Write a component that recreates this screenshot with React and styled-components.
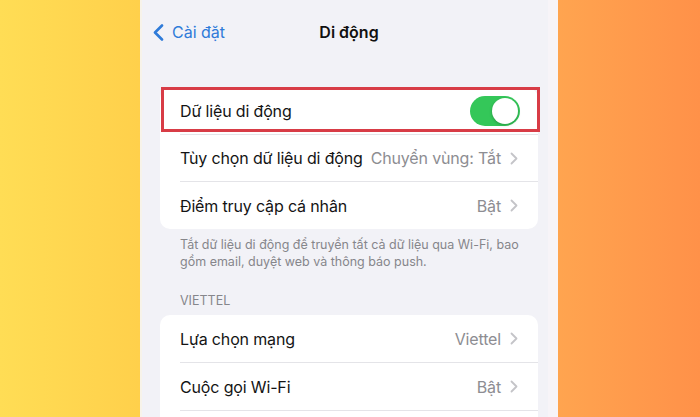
import React from "react";
import styled, { createGlobalStyle } from "styled-components";

const Global = createGlobalStyle`
  html, body { margin: 0; padding: 0; }
  body { font-family: Inter, "Noto Sans", "Liberation Sans", sans-serif; -webkit-font-smoothing: antialiased; }
  #root { width: 700px; height: 417px; overflow: hidden; }
`;

const Stage = styled.div`
  width: 700px;
  height: 417px;
  background: linear-gradient(90deg, #ffdd55 0%, #ffd04b 20%, #ffa650 78%, #ff9149 100%);
  display: flex;
  justify-content: flex-start;
  padding-left: 140px;
  box-sizing: border-box;
`;

const Phone = styled.div`
  width: 418px;
  height: 417px;
  background: #f2f2f7;
  overflow: hidden;
  box-shadow: inset -10px 0 0 #f7f4f8, inset 2px 0 0 #f7f3ea;
`;

const Nav = styled.div`
  height: 64px;
  display: grid;
  grid-template-columns: 1fr auto 1fr;
  align-items: center;
  padding: 0 13px;
`;

const Back = styled.div`
  display: flex;
  align-items: center;
  gap: 8px;
  color: #2f7bd9;
  font-size: 16px;
`;

const Title = styled.div`
  font-size: 16px;
  font-weight: 600;
  color: #111;
`;

const Content = styled.div`
  padding: 24px 20px 0 20px;
`;

const Card = styled.div`
  background: #fff;
  border-radius: 10px;
`;

const Row = styled.div`
  position: relative;
  height: ${(p) => p.$h || 47}px;
  padding-left: 20px;
  display: flex;
  ${(p) =>
    p.$highlight &&
    `&::after {
      content: "";
      position: absolute;
      left: 1px; right: -2px; top: -1px; height: 45px;
      border: 3px solid #d83c46;
      box-sizing: border-box;
      pointer-events: none;
    }`}
`;

const RowInner = styled.div`
  flex: 1;
  display: flex;
  align-items: center;
  justify-content: space-between;
  padding-right: 20px;
  border-bottom: ${(p) => (p.$last ? "none" : "1px solid #e4e4e8")};
`;

const Label = styled.span`
  font-size: 16px;
  color: #141414;
  letter-spacing: -0.15px;
`;

const Value = styled.span`
  display: flex;
  align-items: center;
  gap: 9px;
  font-size: 16px;
  color: #8d8d92;
  letter-spacing: -0.15px;
`;

const Toggle = styled.div`
  width: 50px;
  height: 30px;
  border-radius: 15px;
  background: #34c759;
  position: relative;
  margin-right: -2px;
  &::after {
    content: "";
    position: absolute;
    right: 2px;
    top: 2px;
    width: 26px;
    height: 26px;
    border-radius: 50%;
    background: #fff;
    box-shadow: 0 1px 3px rgba(0,0,0,0.25);
  }
`;

const Footer = styled.div`
  margin-top: 7px;
  padding: 0 8px 0 20px;
  font-size: 12.5px;
  line-height: 17px;
  color: #86868b;
`;

const SectionHeader = styled.div`
  margin-top: 22px;
  margin-bottom: 6px;
  padding: 0 20px;
  font-size: 12.5px;
  line-height: 17px;
  color: #86868b;
`;

const Chevron = () => (
  <svg width="8" height="13" viewBox="0 0 8 13">
    <path d="M1.5 1.5 L6.5 6.5 L1.5 11.5" fill="none" stroke="#c4c4c8" strokeWidth="1.8" strokeLinecap="round" strokeLinejoin="round" />
  </svg>
);

const BackChevron = () => (
  <svg width="11" height="17" viewBox="0 0 11 17">
    <path d="M9 1.5 L2 8.5 L9 15.5" fill="none" stroke="#2f7bd9" strokeWidth="2.6" strokeLinecap="round" strokeLinejoin="round" />
  </svg>
);

const group1 = [
  { label: "Dữ liệu di động", toggle: true },
  { label: "Tùy chọn dữ liệu di động", value: "Chuyển vùng: Tắt" },
  { label: "Điểm truy cập cá nhân", value: "Bật" },
];

const group2 = [
  { label: "Lựa chọn mạng", value: "Viettel" },
  { label: "Cuộc gọi Wi-Fi", value: "Bật" },
];

function SettingRow({ item, last, highlight, h }) {
  return (
    <Row $highlight={highlight} $h={h}>
      <RowInner $last={last}>
        <Label>{item.label}</Label>
        {item.toggle ? (
          <Toggle />
        ) : (
          <Value>
            {item.value}
            <Chevron />
          </Value>
        )}
      </RowInner>
    </Row>
  );
}

export default function App() {
  return (
    <>
      <Global />
      <Stage>
        <Phone>
          <Nav>
            <Back>
              <BackChevron />
              Cài đặt
            </Back>
            <Title>Di động</Title>
            <div />
          </Nav>
          <Content>
            <Card>
              {group1.map((it, i) => (
                <SettingRow key={it.label} item={it} last={i === group1.length - 1} highlight={i === 0} />
              ))}
            </Card>
            <Footer>
              Tắt dữ liệu di động để truyền tất cả dữ liệu qua Wi-Fi, bao gồm email, duyệt web và thông báo push.
            </Footer>
            <SectionHeader>VIETTEL</SectionHeader>
            <Card>
              {group2.map((it) => (
                <SettingRow key={it.label} item={it} h={48} />
              ))}
              <Row $h={47}>
                <RowInner $last />
              </Row>
            </Card>
          </Content>
        </Phone>
      </Stage>
    </>
  );
}
